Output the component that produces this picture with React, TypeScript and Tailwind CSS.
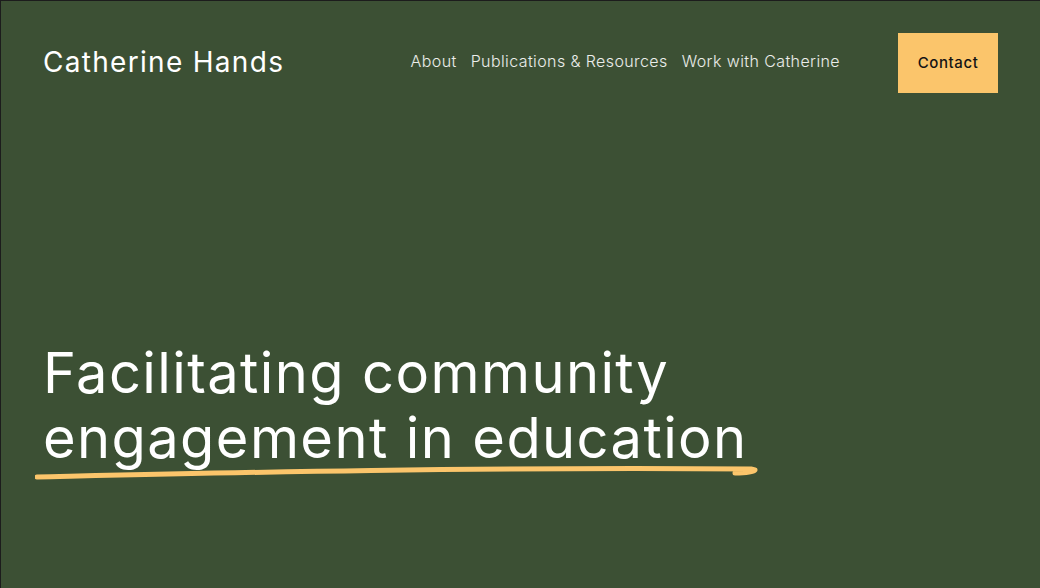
import React from "react";

const navLinks = ["About", "Publications & Resources", "Work with Catherine"];

export default function App() {
  return (
    <div className="min-h-screen w-full bg-[#3c5034] border-t border-l border-[#1c1c1c] font-['Inter',sans-serif] text-white">
      {/* Header */}
      <header className="flex items-center justify-between pl-[42px] pr-[42px] pt-[32px]">
        <a href="#" className="pb-[2px] text-[28px] tracking-[1.3px] leading-none">
          Catherine Hands
        </a>
        <div className="flex items-center">
          <nav className="flex items-center gap-[14px] pb-[4px] text-[16px] font-light tracking-[0.4px] text-white/90">
            {navLinks.map((link) => (
              <a key={link} href="#">
                {link}
              </a>
            ))}
          </nav>
          <a
            href="#"
            className="ml-[58px] flex h-[60px] w-[100px] items-center justify-center bg-[#fbc56b] text-[15px] font-medium tracking-[0.6px] text-[#141414]"
          >
            Contact
          </a>
        </div>
      </header>

      {/* Hero */}
      <main className="pl-[42px] pt-[248px]">
        <h1 className="text-[56px] leading-[65px] font-normal tracking-[1.4px]">
          Facilitating community
          <br />
          <span className="relative inline-block">
            engagement in education
            <svg
              className="absolute left-[-8px] top-[57px] h-[18px] w-[724px]"
              viewBox="0 0 724 18"
              fill="none"
            >
              <path
                d="M2 14 C 180 10, 420 4, 716 6 L 720 7 C 718 9, 710 10, 700 10"
                stroke="#fbc56b"
                strokeWidth="5"
                strokeLinecap="round"
                strokeLinejoin="round"
              />
            </svg>
          </span>
        </h1>
      </main>
    </div>
  );
}
